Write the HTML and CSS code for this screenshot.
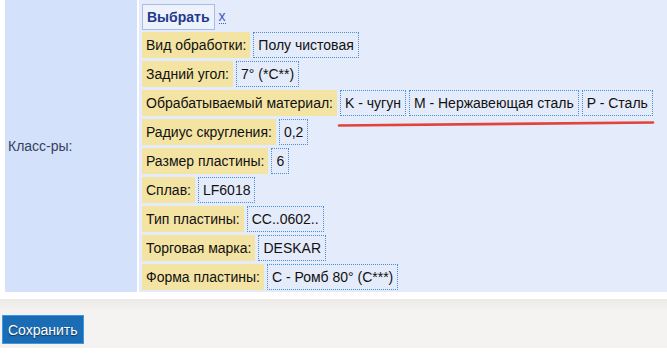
FILE: index.html
```html
<!DOCTYPE html>
<html lang="ru">

<head>
    <meta charset="UTF-8">
    <title>Класс-ры</title>
    <link rel="stylesheet" href="styles.css">
</head>

<body>

    <section class="form">

        <div class="caption">Класс-ры:</div>

        <div class="fields">

            <div class="row first">
                <button class="pick">Выбрать</button>
                <a class="clear" href="#">x</a>
            </div>

            <div class="row">
                <span class="label">Вид обработки:</span>
                <span class="value">Полу чистовая</span>
            </div>

            <div class="row">
                <span class="label">Задний угол:</span>
                <span class="value">7° (*C**)</span>
            </div>

            <div class="row">
                <span class="label">Обрабатываемый материал:</span>
                <span class="value">K - чугун</span>
                <span class="value">M - Нержавеющая сталь</span>
                <span class="value">P - Сталь</span>
            </div>

            <div class="row">
                <span class="label">Радиус скругления:</span>
                <span class="value">0,2</span>
            </div>

            <div class="row">
                <span class="label">Размер пластины:</span>
                <span class="value">6</span>
            </div>

            <div class="row">
                <span class="label">Сплав:</span>
                <span class="value">LF6018</span>
            </div>

            <div class="row">
                <span class="label">Тип пластины:</span>
                <span class="value">CC..0602..</span>
            </div>

            <div class="row">
                <span class="label">Торговая марка:</span>
                <span class="value">DESKAR</span>
            </div>

            <div class="row">
                <span class="label">Форма пластины:</span>
                <span class="value">C - Ромб 80° (C***)</span>
            </div>

            <svg class="mark" width="320" height="8" viewBox="0 0 320 8">
                <path d="M2 5.5 Q 160 4.5 316 2.5" stroke="#e2433c" stroke-width="2.6" fill="none" stroke-linecap="round" />
            </svg>

        </div>

    </section>

    <footer>
        <button class="save">Сохранить</button>
    </footer>

</body>

</html>
```

FILE: styles.css
```css
body {
    margin: 0;
    font-family: "Liberation Sans", Arial, sans-serif;
    font-size: 14px;
    color: #111;
    background-color: white;
}

.form {
    display: flex;
    gap: 2px;
    padding-left: 5px;
}

.caption {
    width: 132px;
    flex-shrink: 0;
    display: flex;
    align-items: center;
    padding-left: 3px;
    box-sizing: border-box;
    background-color: #d4e1fa;
    color: #34425e;
}

.fields {
    position: relative;
    flex: 1;
    padding: 3px 3px 2px 3px;
    background-color: #e4ebfa;
}

.row {
    display: flex;
    align-items: flex-start;
    gap: 3px;
    margin-bottom: 3px;
}

.row.first {
    margin-bottom: 2px;
}

.row:last-of-type {
    margin-bottom: 0;
}

.pick {
    height: 26px;
    margin: 1px 0 0 0;
    padding: 0 4px;
    font-family: "Liberation Sans", Arial, sans-serif;
    font-size: 14px;
    font-weight: bold;
    color: #1f3a8a;
    background-color: #eef2fc;
    border: 1px solid #a7bde6;
}

.clear {
    margin-left: 1px;
    margin-top: 7px;
    color: #3a5cc8;
    text-decoration: none;
    border-bottom: 1px dotted #3a5cc8;
    line-height: 13px;
}

.label {
    height: 26px;
    line-height: 26px;
    padding: 0 4px;
    background-color: #f4e4a3;
    white-space: nowrap;
}

.value {
    height: 24px;
    line-height: 25px;
    padding: 0 4px;
    border: 1px dotted #4a8fd6;
    white-space: nowrap;
}

.mark {
    position: absolute;
    left: 198px;
    top: 120px;
}

footer {
    margin-top: 7px;
    padding: 16px 0 4px 2px;
    height: 29px;
    background: linear-gradient(#eceae6, #f4f3f1 11px);
}

.save {
    height: 29px;
    padding: 0 5px;
    font-family: "Liberation Sans", Arial, sans-serif;
    font-size: 14px;
    color: white;
    text-shadow: 0 1px 1px rgba(0, 0, 0, 0.55);
    background-color: #1a6cb4;
    border: 1px solid #3f96e2;
}
```
